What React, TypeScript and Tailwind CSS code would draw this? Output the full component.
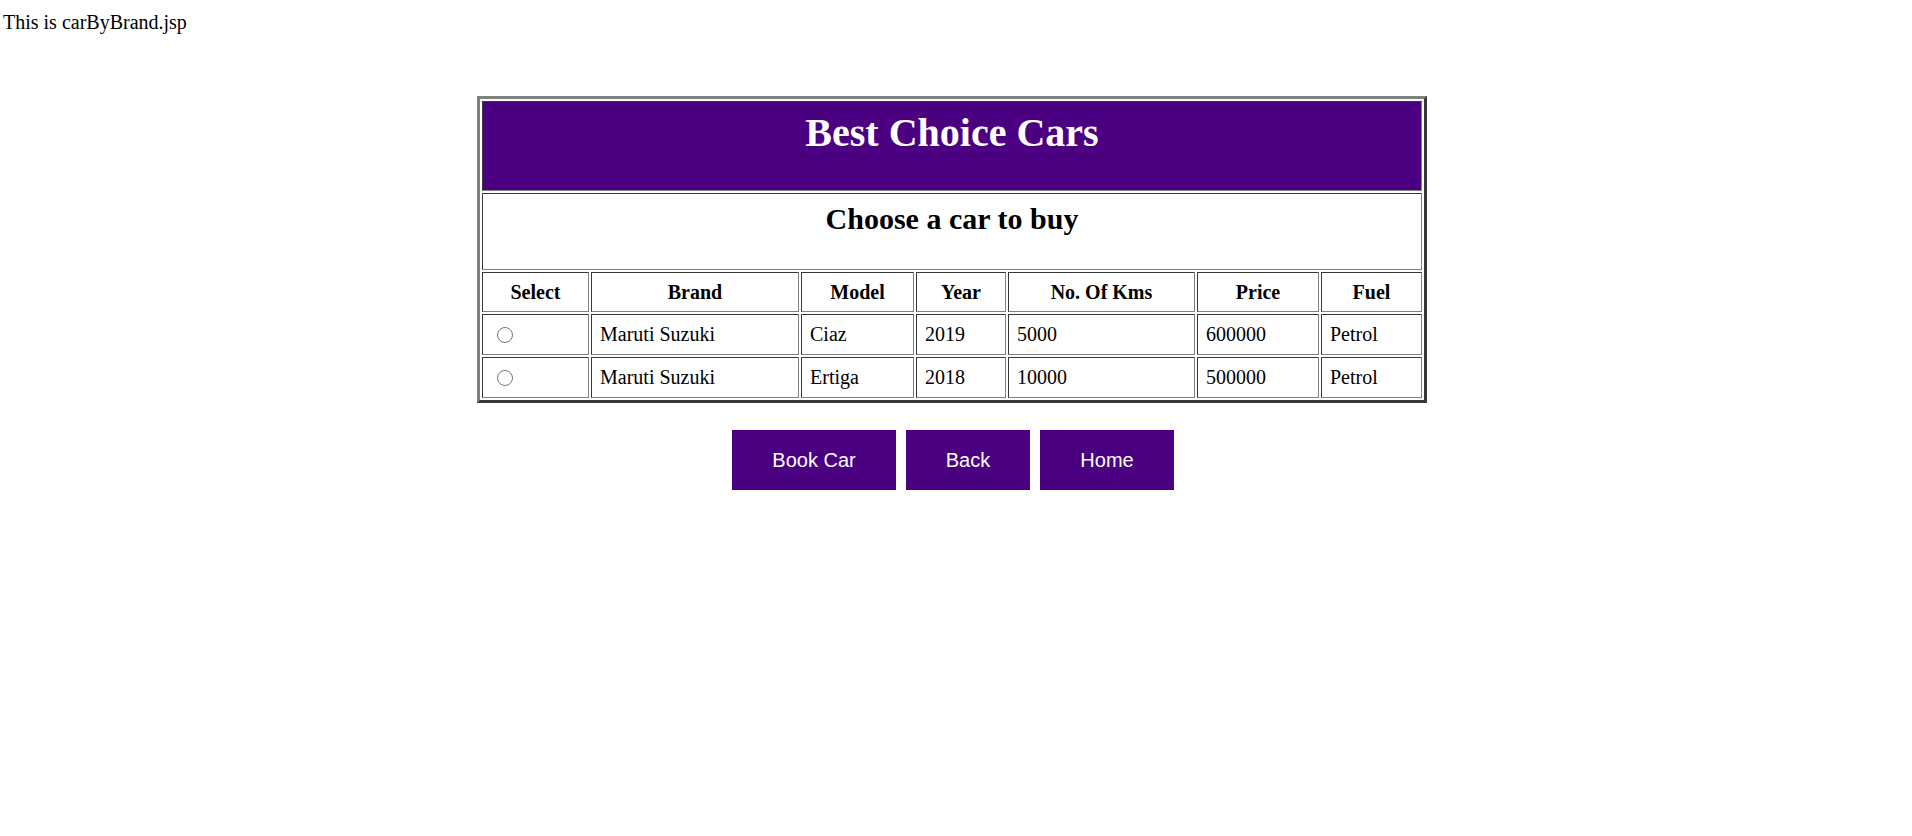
import React from 'react'

const cars = [
  { brand: 'Maruti Suzuki', model: 'Ciaz', year: '2019', kms: '5000', price: '600000', fuel: 'Petrol' },
  { brand: 'Maruti Suzuki', model: 'Ertiga', year: '2018', kms: '10000', price: '500000', fuel: 'Petrol' },
]

const headers = ['Select', 'Brand', 'Model', 'Year', 'No. Of Kms', 'Price', 'Fuel']

// inset cell border like a plain border="1" table
const cell =
  'border border-solid border-t-[#383838] border-l-[#383838] border-r-[#808080] border-b-[#808080]'

export default function App() {
  return (
    <div className="min-h-screen bg-white text-black font-['Liberation_Serif',serif] text-[20px]">
      <div className="pl-[3px] pt-[11px] leading-[23px]">This is carByBrand.jsp</div>

      <div className="ml-[477px] mt-[62px] w-[950px]">
        <table className="table-fixed w-[950px] border-separate border-spacing-[2px] border-[3px] border-solid border-t-[#808080] border-l-[#808080] border-r-[#383838] border-b-[#383838]">
          <colgroup>
            <col className="w-[107px]" />
            <col className="w-[208px]" />
            <col className="w-[113px]" />
            <col className="w-[90px]" />
            <col className="w-[187px]" />
            <col className="w-[122px]" />
            <col className="w-[101px]" />
          </colgroup>
          <tbody>
            <tr className="h-[90px]">
              <td colSpan={7} className={`${cell} bg-[#4B0082] align-top pt-[8px] text-center`}>
                <h1 className="text-[40px] leading-[46px] font-bold text-white">Best Choice Cars</h1>
              </td>
            </tr>
            <tr className="h-[77px]">
              <td colSpan={7} className={`${cell} align-top pt-[8px] text-center`}>
                <h2 className="text-[30px] leading-[34px] font-bold">Choose a car to buy</h2>
              </td>
            </tr>
            <tr className="h-[40px]">
              {headers.map((h) => (
                <th key={h} className={`${cell} font-bold text-center align-middle leading-[23px] px-[8px]`}>
                  {h}
                </th>
              ))}
            </tr>
            {cars.map((car, i) => (
              <tr key={i} className="h-[41px]">
                <td className={`${cell} align-middle px-[8px] leading-[16px]`}>
                  <input type="radio" name="car" className="block w-[16px] h-[16px] m-0 ml-[6px]" />
                </td>
                <td className={`${cell} align-middle px-[8px] leading-[23px]`}>{car.brand}</td>
                <td className={`${cell} align-middle px-[8px] leading-[23px]`}>{car.model}</td>
                <td className={`${cell} align-middle px-[8px] leading-[23px]`}>{car.year}</td>
                <td className={`${cell} align-middle px-[8px] leading-[23px]`}>{car.kms}</td>
                <td className={`${cell} align-middle px-[8px] leading-[23px]`}>{car.price}</td>
                <td className={`${cell} align-middle px-[8px] leading-[23px]`}>{car.fuel}</td>
              </tr>
            ))}
          </tbody>
        </table>

        <div className="flex justify-center gap-[10px] mt-[27px] pl-[2px] font-['Liberation_Sans',Arial,sans-serif] text-[20px] text-white">
          <button className="w-[164px] h-[60px] bg-[#4B0082] flex items-center justify-center">Book Car</button>
          <button className="w-[124px] h-[60px] bg-[#4B0082] flex items-center justify-center">Back</button>
          <button className="w-[134px] h-[60px] bg-[#4B0082] flex items-center justify-center">Home</button>
        </div>
      </div>
    </div>
  )
}
